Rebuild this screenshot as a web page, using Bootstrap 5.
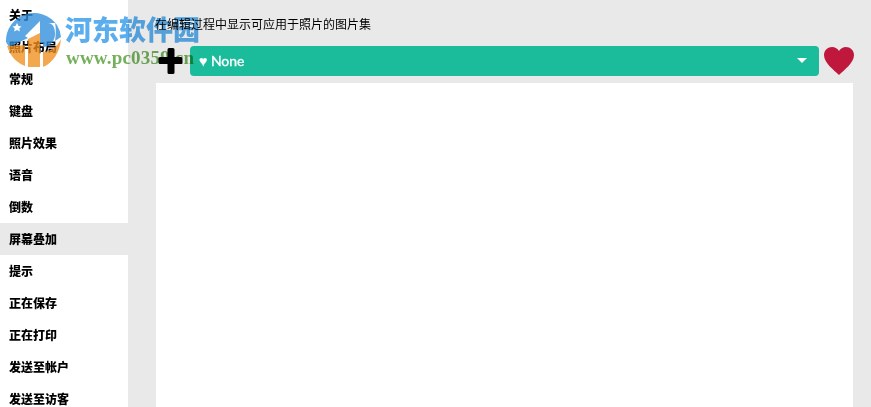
<!DOCTYPE html>
<html lang="zh-CN">

<head>
  <meta charset="UTF-8">
  <title>照片布局</title>
  <meta name="viewport" content="width=device-width, initial-scale=1">
  <link href="https://cdn.jsdelivr.net/npm/bootstrap@5.3.3/dist/css/bootstrap.min.css" rel="stylesheet">
  <script src="https://cdn.jsdelivr.net/npm/bootstrap@5.3.3/dist/js/bootstrap.bundle.min.js"></script>
  <style>
    html, body {
      height: 100%;
      overflow: hidden;
    }

    body {
      background-color: #e9e9e9;
      color: #000;
      font-family: "Liberation Sans", "Noto Sans CJK SC", sans-serif;
      font-size: 12px;
    }

    .side-menu {
      width: 128px;
      height: 408px;
      margin-top: -1px;
      overflow: hidden;
    }

    .side-item {
      height: 32px;
      line-height: 34px;
      padding-left: 9px;
      font-weight: 900;
      color: #000;
      background-color: #fff;
    }

    .side-item.active-item {
      background-color: #e9e9e9;
    }

    .main-pane {
      padding: 0 18px 0 28px;
    }

    .hint-text {
      height: 46px;
      line-height: 50px;
      margin-left: -1px;
    }

    .plus-icon {
      width: 34px;
      height: 30px;
    }

    .set-select {
      flex: 1 1 auto;
      height: 30px;
      padding: 0 12px 2px 9px;
      background-color: #1abc9c;
      border-radius: 4px;
      color: #fff;
      font-family: Lato, sans-serif;
      font-size: 14px;
      font-weight: 400;
      -webkit-text-stroke: .3px #fff;
    }

    .caret-down {
      border-left: 5px solid transparent;
      border-right: 5px solid transparent;
      border-top: 5px solid #fff;
    }

    .heart-icon {
      width: 30px;
      height: 30px;
      margin-left: 5px;
      margin-right: -1px;
    }

    .photo-panel {
      height: 324px;
      margin-top: 7px;
      background-color: #fff;
    }

    .wm-logo {
      position: absolute;
      left: 5px;
      top: 11px;
      width: 57px;
      height: 57px;
      opacity: .78;
      pointer-events: none;
    }

    .wm-title {
      position: absolute;
      left: 65px;
      top: 11px;
      font-family: "Noto Sans CJK SC", sans-serif;
      font-size: 27px;
      font-weight: 900;
      line-height: 36px;
      color: #5aaeee;
      mix-blend-mode: multiply;
      white-space: nowrap;
    }

    .wm-url {
      position: absolute;
      left: 66px;
      top: 47px;
      font-family: "Liberation Serif", serif;
      font-size: 19px;
      font-weight: 700;
      line-height: 22px;
      letter-spacing: .2px;
      color: #74b05a;
      mix-blend-mode: multiply;
      white-space: nowrap;
    }
  </style>
</head>

<body>
  <div class="d-flex">
    <div class="side-menu flex-shrink-0">
      <div class="side-item">关于</div>
      <div class="side-item">照片布局</div>
      <div class="side-item">常规</div>
      <div class="side-item">键盘</div>
      <div class="side-item">照片效果</div>
      <div class="side-item">语音</div>
      <div class="side-item">倒数</div>
      <div class="side-item active-item">屏幕叠加</div>
      <div class="side-item">提示</div>
      <div class="side-item">正在保存</div>
      <div class="side-item">正在打印</div>
      <div class="side-item">发送至帐户</div>
      <div class="side-item">发送至访客</div>
    </div>

    <div class="main-pane flex-grow-1">
      <div class="hint-text">在编辑过程中显示可应用于照片的图片集</div>
      <div class="d-flex align-items-center">
        <svg class="plus-icon flex-shrink-0" viewBox="0 0 34 30">
          <path d="M11.500 3.500a1.500 1.500 0 0 1 1.500-1.500h4a1.500 1.500 0 0 1 1.500 1.500V11H25a1.500 1.500 0 0 1 1.500 1.500v4A1.500 1.500 0 0 1 25 18h-6.500v8.500A1.500 1.500 0 0 1 17 28h-4a1.500 1.500 0 0 1-1.500-1.500V18H4a1.500 1.500 0 0 1-1.500-1.500v-4A1.500 1.500 0 0 1 4 11h7.500z" fill="#000"/>
        </svg>
        <div class="set-select d-flex align-items-center justify-content-between">
          <span>♥ None</span>
          <span class="caret-down"></span>
        </div>
        <svg class="heart-icon flex-shrink-0" viewBox="0 0 30 30">
          <path d="M15 29C10 24 0 17 0 9 0 4 4 1 8 1c3 0 6 2 7 4 1-2 4-4 7-4 4 0 8 3 8 8 0 8-10 15-15 20z" fill="#c0183c"/>
        </svg>
      </div>
      <div class="photo-panel"></div>
    </div>
  </div>

  <!-- watermark on top of the page -->
  <svg class="wm-logo" viewBox="0 0 57 57">
    <path d="M1 31A28 28 0 0 1 52 14L50 12H38v20H35V10L20 25 23 27 4 36C3 34 2 33 1 31z" fill="#2f8fdc"/>
    <path d="M38 12h5c5 0 7 5 7 11s-4 13-12 13z" fill="#2f8fdc"/>
    <path d="M52 14A28 28 0 0 1 56 26L50 30C51 22 51 17 50 12z" fill="#2f8fdc"/>
    <path d="M23 28l12-6v34H23z" fill="#f09020"/>
    <path d="M2 35l18-1v21C12 52 5 45 2 35z" fill="#f09020"/>
    <path d="M38 41c8-1 14-5 18-13C55 41 48 52 38 56z" fill="#f09020"/>
    <path d="M12 12l1.500 3 3 .5-2.200 2 .5 3-2.800-1.500-2.800 1.500.5-3-2.200-2 3-.5z" fill="#fff"/>
  </svg>
  <div class="wm-title">河东软件园</div>
  <div class="wm-url">www.pc0359.cn</div>
</body>

</html>
